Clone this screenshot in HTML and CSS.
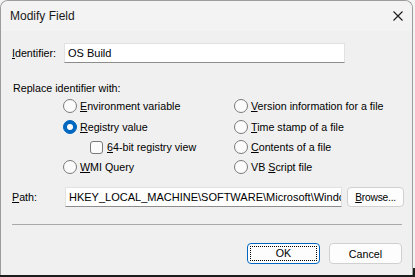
FILE: index.html
```html
<!DOCTYPE html>
<html>
<head>
  <title>Modify Field</title>
  <link rel="stylesheet" href="styles.css">
</head>
<body>
  <div class="window">
    <div class="titlebar">
      <span class="title">Modify Field</span>
      <svg class="close" width="10" height="10" viewBox="0 0 10 10">
        <path d="M0.5 0.5 L9.5 9.5 M9.5 0.5 L0.5 9.5" stroke="#1a1a1a" stroke-width="1.1" fill="none"/>
      </svg>
    </div>

    <div class="content">
      <div class="field-row">
        <label class="field-label"><u>I</u>dentifier:</label>
        <div class="textbox ident">OS Build</div>
      </div>

      <div class="group-label">Replace identifier with:</div>

      <div class="options">
        <div class="option"><span class="radio"></span><span><u>E</u>nvironment variable</span></div>
        <div class="option"><span class="radio"></span><span><u>V</u>ersion information for a file</span></div>
        <div class="option"><span class="radio checked"></span><span><u>R</u>egistry value</span></div>
        <div class="option"><span class="radio"></span><span><u>T</u>ime stamp of a file</span></div>
        <div class="option sub"><span class="checkbox"></span><span><u>6</u>4-bit registry view</span></div>
        <div class="option"><span class="radio"></span><span><u>C</u>ontents of a file</span></div>
        <div class="option"><span class="radio"></span><span><u>W</u>MI Query</span></div>
        <div class="option"><span class="radio"></span><span>VB <u>S</u>cript file</span></div>
      </div>

      <div class="field-row path-row">
        <label class="field-label"><u>P</u>ath:</label>
        <div class="textbox path">HKEY_LOCAL_MACHINE\SOFTWARE\Microsoft\Windows NT\CurrentVersion</div>
        <button class="btn browse"><u>B</u>rowse...</button>
      </div>

      <div class="separator"></div>

      <div class="actions">
        <button class="btn ok"><span class="focus">OK</span></button>
        <button class="btn">Cancel</button>
      </div>
    </div>
  </div>
</body>
</html>
```

FILE: styles.css
```css
html, body {
  margin: 0;
  padding: 0;
}

body {
  width: 415px;
  height: 277px;
  overflow: hidden;
  background: linear-gradient(#f4f4f4 0 268px, #1c1c1c 268px);
  font-family: "Liberation Sans", Arial, sans-serif;
  font-size: 10.7px;
  color: #000;
}

.window {
  width: 411px;
  height: 274px;
  background-color: #f0f0f0;
  border: 1px solid #9c9c9c;
  border-bottom: none;
  border-radius: 8px 8px 0 0;
  overflow: hidden;
}

.titlebar {
  height: 30px;
  background-color: #f3f3f3;
  display: flex;
  align-items: center;
  justify-content: space-between;
  padding: 0 9px 0 9px;
}

.title {
  font-size: 12px;
  color: #1a1a1a;
}

.content {
  padding: 0 10px 0 11px;
}

.field-row {
  display: flex;
  align-items: center;
  margin-top: 12px;
  height: 20px;
}

.field-label {
  width: 52px;
  flex: none;
}

.textbox {
  height: 18px;
  line-height: 18px;
  font-size: 11px;
  background-color: #fff;
  border: 1px solid #e2e2e2;
  border-bottom-color: #8c8c8c;
  padding-left: 3px;
  white-space: nowrap;
  overflow: hidden;
  box-sizing: content-box;
}

.ident {
  width: 276px;
}

.group-label {
  margin-top: 18px;
  line-height: 14px;
  padding-left: 1px;
}

.options {
  display: grid;
  grid-template-columns: 171px auto;
  grid-template-rows: 20px 21px 20px 20px;
  margin-top: 1px;
  margin-left: 51px;
}

.option {
  display: flex;
  align-items: center;
}

.option.sub {
  padding-left: 27px;
}

.radio {
  width: 12px;
  height: 12px;
  border: 1px solid #7a7a7a;
  border-radius: 50%;
  background-color: #fbfbfb;
  margin-right: 3px;
  position: relative;
}

.radio.checked {
  border-color: #0067c0;
  background-color: #0067c0;
}

.radio.checked::after {
  content: "";
  position: absolute;
  left: 3px;
  top: 3px;
  width: 6px;
  height: 6px;
  border-radius: 50%;
  background-color: #fff;
}

.checkbox {
  width: 11px;
  height: 11px;
  border: 1px solid #7a7a7a;
  border-radius: 3px;
  background-color: #fbfbfb;
  margin-right: 4px;
}

.path-row {
  margin-top: 10px;
}

.path {
  width: 273px;
  margin-left: 1px;
}

.btn {
  font-family: "Liberation Sans", Arial, sans-serif;
  font-size: 10.7px;
  color: #000;
  background-color: #fdfdfd;
  border: 1px solid #d0d0d0;
  border-radius: 4px;
  height: 20px;
  padding: 0;
}

.browse {
  width: 57px;
  margin-left: 5px;
  margin-right: -2px;
  font-size: 10.2px;
  letter-spacing: -0.2px;
  white-space: nowrap;
}

.separator {
  margin-top: 17px;
  height: 1px;
  background-color: #a9a9a9;
}

.actions {
  display: flex;
  justify-content: flex-end;
  gap: 9px;
  margin-top: 18px;
}

.actions .btn {
  width: 73px;
  height: 21px;
}

.btn.ok {
  border: 1px solid #0067c0;
  padding: 2px;
}

.ok .focus {
  display: block;
  height: 100%;
  line-height: 13px;
  border: 1px dotted #000;
  box-sizing: border-box;
}
```
